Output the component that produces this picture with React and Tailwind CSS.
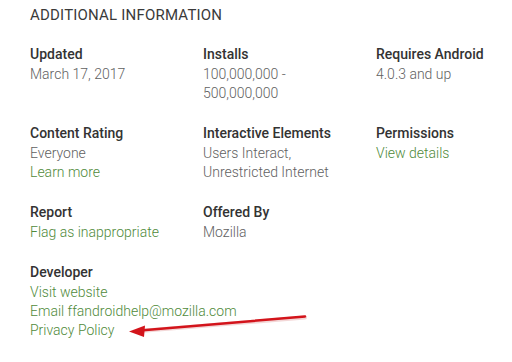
import React from "react";

const H = ({ children }) => (
  <div className="text-[14px] leading-[20px] font-medium text-[#333333] mb-[1px]">{children}</div>
);
const V = ({ children }) => (
  <div className="text-[14px] leading-[19px] font-light text-[#616161] whitespace-nowrap">{children}</div>
);
const L = ({ children }) => (
  <div className="text-[14px] leading-[19px] font-light text-[#4f8a3a] whitespace-nowrap">{children}</div>
);

export default function App() {
  return (
    <div className="relative w-[512px] h-[362px] bg-white overflow-hidden" style={{ fontFamily: "Roboto, 'Liberation Sans', sans-serif" }}>
      <div className="pl-[30px] pt-[5px]">
        <div className="text-[15px] leading-[20px] font-normal text-[#3a3a3a] tracking-[0.2px] uppercase mb-[19px]">Additional Information</div>
        <div className="grid grid-cols-[173px_173px_136px] gap-y-[20px]">
          <div><H>Updated</H><V>March 17, 2017</V></div>
          <div><H>Installs</H><V>100,000,000 -</V><V>500,000,000</V></div>
          <div><H>Requires Android</H><V>4.0.3 and up</V></div>

          <div><H>Content Rating</H><V>Everyone</V><L>Learn more</L></div>
          <div><H>Interactive Elements</H><V>Users Interact,</V><V>Unrestricted Internet</V></div>
          <div><H>Permissions</H><L>View details</L></div>

          <div><H>Report</H><L>Flag as inappropriate</L></div>
          <div><H>Offered By</H><V>Mozilla</V></div>
          <div></div>

          <div className="col-span-3"><H>Developer</H><L>Visit website</L><L>Email ffandroidhelp@mozilla.com</L><L>Privacy Policy</L></div>
        </div>
      </div>
      <svg className="absolute left-0 top-0" width="512" height="362" viewBox="0 0 512 362">
        <line x1="305" y1="317.5" x2="140" y2="331" stroke="#e8b0b0" strokeWidth="4" strokeLinecap="round" opacity="0.5" />
        <line x1="305" y1="316.5" x2="140" y2="330.5" stroke="#d3141b" strokeWidth="2.5" strokeLinecap="round" />
        <polygon points="129,331.5 145,325.5 144,337" fill="#d3141b" />
      </svg>
    </div>
  );
}
